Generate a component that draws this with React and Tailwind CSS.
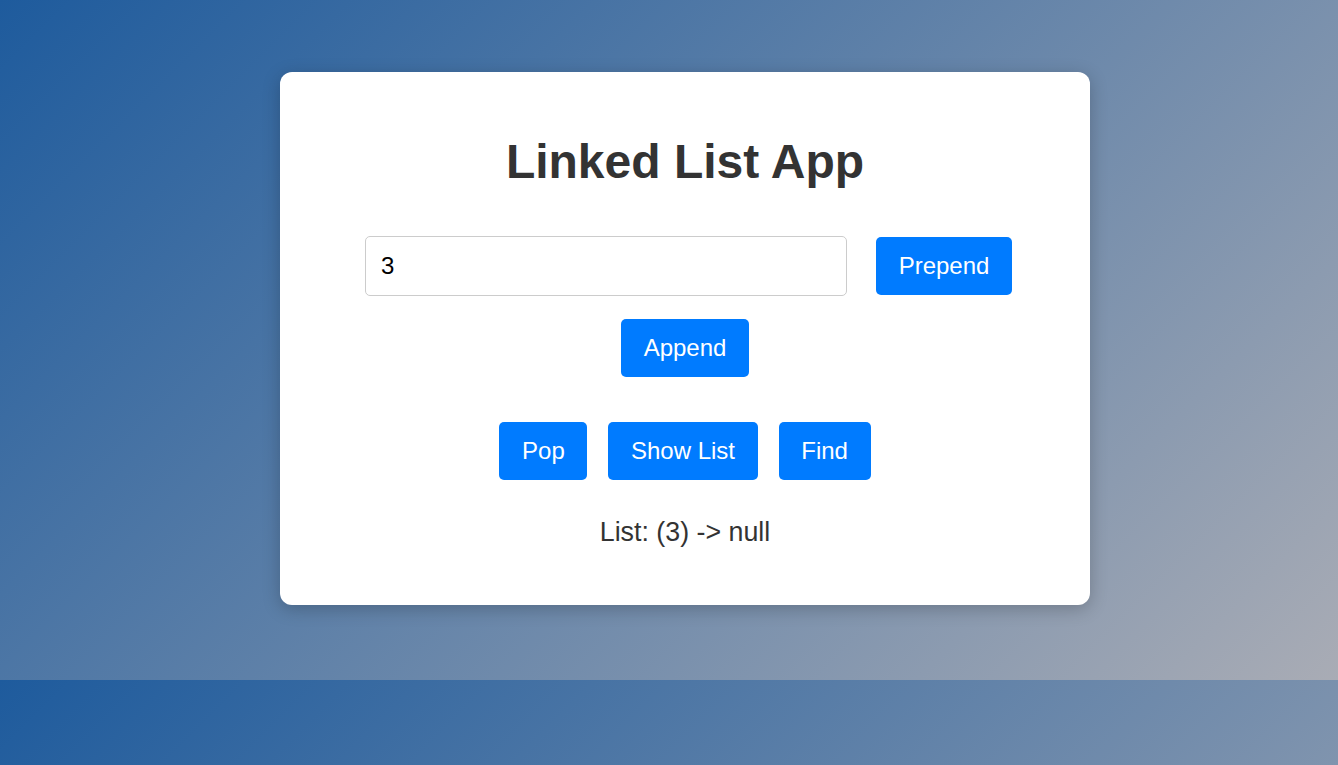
import React, { useState } from "react";

export default function App() {
  const [value, setValue] = useState("3");
  return (
    <div
      className="h-[765px] w-full overflow-hidden bg-[linear-gradient(135deg,#1e5b9d,#a9acb5)] bg-[length:100%_680px] bg-repeat pt-[72px]"
      style={{ fontFamily: '"Liberation Sans", Arial, sans-serif' }}
    >
      <div className="ml-[280px] flex w-[810px] flex-col items-center rounded-[12px] bg-white pt-[62px] pb-[57px] shadow-[0_4px_18px_rgba(0,0,0,0.22)]">
        <h1 className="text-[48px] font-bold leading-[normal] text-[#333]">Linked List App</h1>
        <div className="mt-[47px] flex items-center gap-[29px] pl-[7px]">
          <input
            value={value}
            onChange={(e) => setValue(e.target.value)}
            className="h-[60px] w-[482px] rounded-[5px] border border-[#ccc] px-[15px] text-[24px] text-black outline-none"
          />
          <button className="h-[58px] rounded-[5px] bg-[#007bff] px-[22.6px] text-[24px] text-white">Prepend</button>
        </div>
        <button className="mt-[23px] h-[58px] rounded-[5px] bg-[#007bff] px-[22.6px] text-[24px] text-white">Append</button>
        <div className="mt-[45px] flex items-center gap-[21px]">
          <button className="h-[58px] rounded-[5px] bg-[#007bff] px-[22.6px] text-[24px] text-white">Pop</button>
          <button className="h-[58px] rounded-[5px] bg-[#007bff] px-[22.6px] text-[24px] text-white">Show List</button>
          <button className="h-[58px] rounded-[5px] bg-[#007bff] px-[22.6px] text-[24px] text-white">Find</button>
        </div>
        <p className="mt-[37px] text-[26.8px] leading-[normal] text-[#333]">List: (3) -&gt; null</p>
      </div>
    </div>
  );
}
